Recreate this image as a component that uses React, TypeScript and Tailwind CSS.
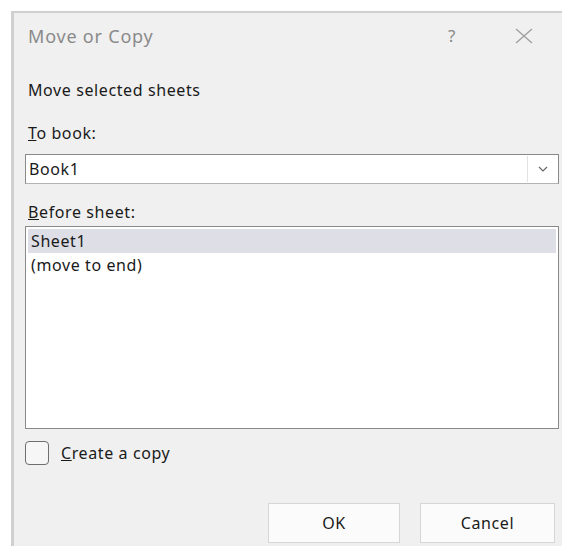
import React, { useState } from 'react';

const font = { fontFamily: '"Noto Sans", "Open Sans", sans-serif' };

const sheets = ['Sheet1', '(move to end)'];

const MoveOrCopy: React.FC = () => {
  const [selected, setSelected] = useState(0);
  const [copy, setCopy] = useState(false);

  return (
    <div className="min-h-screen bg-white pl-[11px] pt-[11px]" style={font}>
      <div className="flex h-[535px] w-[551px] flex-col border-l-[3px] border-t-2 border-[#d0d0d0] bg-[#f0f0f0] pl-[11px] pr-[3px] text-[16px] tracking-[0.6px] text-[#1a1a1a]">
        {/* title bar */}
        <div className="flex h-[46px] items-center">
          <span className="ml-[3px] text-[18px] tracking-[0.8px] text-[#8a8a8a]">Move or Copy</span>
          <span className="ml-auto mr-[58px] text-[17px] text-[#8a8a8a]">?</span>
          <svg width="20" height="20" viewBox="0 0 20 20" className="mr-[25px]">
            <path d="M2 3 L18 17 M18 3 L2 17" stroke="#a0a0a0" strokeWidth="1.4" fill="none" />
          </svg>
        </div>

        <div className="ml-[3px] mt-[19px] leading-[24px]">Move selected sheets</div>

        <div className="ml-[3px] mt-[19px] leading-[24px]">
          <span className="underline">T</span>o book:
        </div>

        {/* workbook combo */}
        <div className="mt-[9px] flex h-[30px] items-center border border-[#8a8a8a] border-b-[#b4b4b4] bg-white">
          <span className="ml-[3px]">Book1</span>
          <div className="ml-auto mr-[1px] flex h-[26px] w-[30px] items-center justify-center border-l border-[#e2e2e2]">
            <svg width="10" height="6" viewBox="0 0 10 6">
              <path d="M1 1 L5 5 L9 1" stroke="#666" strokeWidth="1.2" fill="none" />
            </svg>
          </div>
        </div>

        <div className="ml-[3px] mt-[16px] leading-[24px]">
          <span className="underline">B</span>efore sheet:
        </div>

        {/* sheet list */}
        <div className="mt-[2px] h-[203px] border border-[#8a8a8a] bg-white p-[2px]">
          {sheets.map((name, i) => (
            <div
              key={name}
              onClick={() => setSelected(i)}
              className={`h-[24px] pl-[3px] leading-[24px] ${selected === i ? 'bg-[#dedee6]' : ''}`}
            >
              {name}
            </div>
          ))}
        </div>

        {/* copy option */}
        <label className="mt-[10px] flex h-[27px] items-center">
          <span
            onClick={() => setCopy(!copy)}
            className="flex h-[24px] w-[24px] items-center justify-center rounded-[4px] border border-[#6e6e6e] bg-[#f6f6f6]"
          >
            {copy && <span className="text-[13px]">✓</span>}
          </span>
          <span className="ml-[12px]">
            <span className="underline">C</span>reate a copy
          </span>
        </label>

        {/* actions */}
        <div className="mt-[37px] flex gap-[20px] pl-[243px]">
          <button className="h-[40px] w-[132px] border border-[#d6d6d6] bg-[#fbfbfb] text-[16px]">OK</button>
          <button className="h-[40px] w-[135px] border border-[#d6d6d6] bg-[#fbfbfb] text-[16px]">Cancel</button>
        </div>
      </div>
    </div>
  );
};

export default MoveOrCopy;
